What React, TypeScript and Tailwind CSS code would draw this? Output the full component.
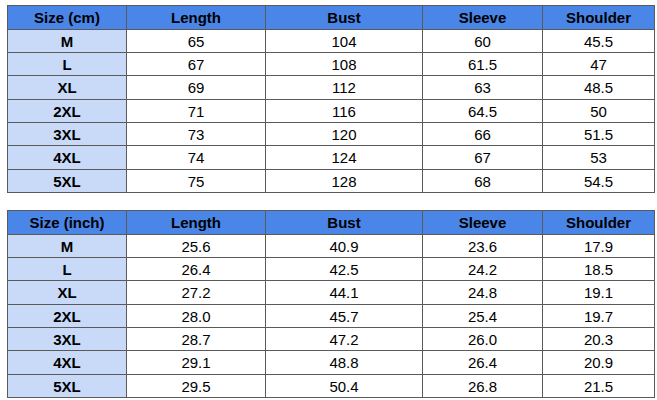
import React from "react";

const cols = ["w-[119px]", "w-[139px]", "w-[157px]", "w-[120px]", "w-[112px]"];
const heights = ["h-[24px]", "h-[23px]", "h-[23px]", "h-[24px]", "h-[23px]", "h-[23px]", "h-[24px]", "h-[23px]"];

const cm = [
  ["M", "65", "104", "60", "45.5"],
  ["L", "67", "108", "61.5", "47"],
  ["XL", "69", "112", "63", "48.5"],
  ["2XL", "71", "116", "64.5", "50"],
  ["3XL", "73", "120", "66", "51.5"],
  ["4XL", "74", "124", "67", "53"],
  ["5XL", "75", "128", "68", "54.5"],
];
const inch = [
  ["M", "25.6", "40.9", "23.6", "17.9"],
  ["L", "26.4", "42.5", "24.2", "18.5"],
  ["XL", "27.2", "44.1", "24.8", "19.1"],
  ["2XL", "28.0", "45.7", "25.4", "19.7"],
  ["3XL", "28.7", "47.2", "26.0", "20.3"],
  ["4XL", "29.1", "48.8", "26.4", "20.9"],
  ["5XL", "29.5", "50.4", "26.8", "21.5"],
];

function SizeTable({ first, rows }: { first: string; rows: string[][] }) {
  const head = [first, "Length", "Bust", "Sleeve", "Shoulder"];
  return (
    <table className="border-collapse table-fixed w-[648px] text-[15px] text-black">
      <tbody>
        <tr className={heights[0]}>
          {head.map((h, i) => (
            <td
              key={i}
              className={`${cols[i]} p-0 border border-[#5a5a5a] bg-[#4a86e8] text-center font-bold leading-none`}
            >
              {h}
            </td>
          ))}
        </tr>
        {rows.map((r, ri) => (
          <tr key={ri} className={heights[ri + 1]}>
            {r.map((c, i) => (
              <td
                key={i}
                className={`p-0 border border-[#5a5a5a] text-center leading-none ${
                  i === 0 ? "bg-[#c9daf8] font-bold" : "bg-white"
                }`}
              >
                {c}
              </td>
            ))}
          </tr>
        ))}
      </tbody>
    </table>
  );
}

export default function App() {
  return (
    <div
      className="w-[657px] h-[400px] bg-white pt-[5px] pl-[7px] flex flex-col gap-[17px]"
      style={{ fontFamily: '"Liberation Sans", Arial, sans-serif' }}
    >
      <SizeTable first="Size (cm)" rows={cm} />
      <SizeTable first="Size (inch)" rows={inch} />
    </div>
  );
}
